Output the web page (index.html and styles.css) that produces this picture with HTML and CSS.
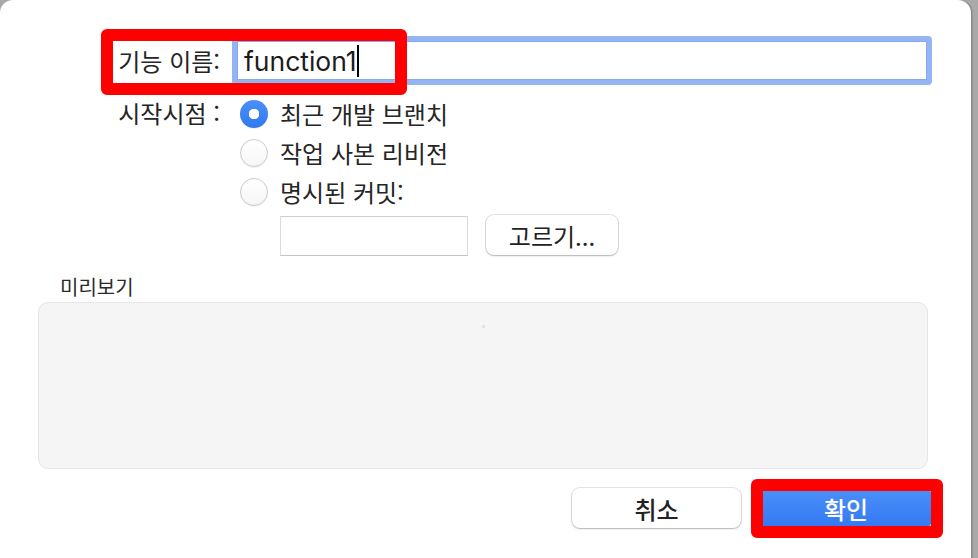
FILE: index.html
```html
<!DOCTYPE html>
<html lang="ko">
<head>
<meta charset="utf-8">
<title>기능 시작</title>
<link rel="stylesheet" href="styles.css">
</head>
<body>
<div class="window">
  <div class="form">
    <div class="label name-label">기능 이름:</div>
    <div class="name-field"><span class="name-text">function1</span><span class="caret"></span></div>

    <div class="label start-label">시작시점 :</div>
    <div class="options">
      <div class="option"><span class="radio checked"></span><span class="opt-text">최근 개발 브랜치</span></div>
      <div class="option"><span class="radio"></span><span class="opt-text">작업 사본 리비전</span></div>
      <div class="option"><span class="radio"></span><span class="opt-text">명시된 커밋:</span></div>
      <div class="commit-row">
        <div class="commit-field"></div>
        <div class="button pick">고르기...</div>
      </div>
    </div>
  </div>

  <div class="preview-label">미리보기</div>
  <div class="preview"><span class="speck"></span></div>

  <div class="actions">
    <div class="button cancel">취소</div>
    <div class="button primary">확인</div>
  </div>

  <div class="mark mark-name"></div>
  <div class="mark mark-ok"></div>
</div>
</body>
</html>
```

FILE: styles.css
```css
html, body {
  margin: 0;
  padding: 0;
}
body {
  width: 978px;
  height: 558px;
  overflow: hidden;
  background: #a9a9a9;
  font-family: "Noto Sans CJK KR", "Noto Sans", sans-serif;
  color: #252525;
}
.window {
  position: relative;
  width: 971px;
  height: 600px;
  background: #ffffff;
  border-radius: 13px 13px 0 0;
  box-shadow: 1px 0 0 #8a8a8a, 2px 0 0 #959595;
  box-sizing: border-box;
  padding-top: 36px;
}
.form {
  display: grid;
  grid-template-columns: 220px 712px;
  column-gap: 12px;
  row-gap: 10px;
  align-items: start;
}
.label {
  text-align: right;
  font-size: 24px;
  line-height: 38px;
  white-space: nowrap;
}
.name-label {
  line-height: 49px;
}
.start-label {
  line-height: 36px;
}
.name-field {
  box-sizing: border-box;
  width: 700px;
  height: 49px;
  border: 5px solid #94b4f4;
  border-radius: 4px;
  box-shadow: inset 0 0 0 1px #86a8ee;
  background: #fff;
  display: flex;
  align-items: center;
  padding-left: 7px;
}
.name-text {
  font-family: "Inter", "Liberation Sans", sans-serif;
  font-size: 26.5px;
  color: #1c1c1c;
}
.caret {
  display: inline-block;
  width: 2px;
  height: 32px;
  background: #000;
}
.options {
  padding-left: 8px;
  display: flex;
  flex-direction: column;
}
.option {
  display: flex;
  align-items: center;
  height: 38px;
  gap: 12px;
  font-size: 24px;
}
.option:nth-child(2) {
  height: 40px;
}
.opt-text {
  white-space: nowrap;
  margin-top: -2px;
}
.radio {
  box-sizing: border-box;
  width: 28px;
  height: 28px;
  border-radius: 50%;
  border: 1px solid #cacaca;
  background: linear-gradient(#ffffff, #f6f6f6);
  box-shadow: 0 1px 1px rgba(0,0,0,0.06);
  flex: none;
}
.radio.checked {
  border: none;
  background: radial-gradient(circle, #ffffff 0 5px, transparent 5.5px), linear-gradient(#4b90f8, #2f78f2);
}
.commit-row {
  display: flex;
  align-items: flex-start;
  gap: 18px;
  margin-top: 4px;
  padding-left: 40px;
}
.commit-field {
  box-sizing: border-box;
  width: 188px;
  height: 40px;
  margin-top: 1px;
  background: #fff;
  border: 1px solid #dcdcdc;
  border-top-color: #d0d0d0;
  border-bottom-color: #c4c4c4;
}
.button {
  box-sizing: border-box;
  height: 40px;
  border-radius: 8px;
  background: #fff;
  box-shadow: 0 0 0 1px rgba(0,0,0,0.10), 0 1px 2px rgba(0,0,0,0.22);
  display: flex;
  align-items: center;
  justify-content: center;
  font-size: 24px;
  color: #222;
}
.pick {
  width: 132px;
}
.preview-label {
  margin: 16px 0 0 60px;
  font-size: 20px;
  line-height: 30px;
  color: #2a2a2a;
}
.preview {
  position: relative;
  box-sizing: border-box;
  margin: 0 0 0 38px;
  width: 890px;
  height: 167px;
  background: #f5f5f5;
  border: 1px solid #e6e6e6;
  border-radius: 10px;
}
.speck {
  position: absolute;
  left: 443px;
  top: 22px;
  width: 3px;
  height: 3px;
  background: #e2e2e2;
}
.actions {
  display: flex;
  gap: 19px;
  margin: 19px 0 0 572px;
}
.cancel {
  width: 169px;
  font-weight: 500;
}
.primary {
  width: 172px;
  color: #fff;
  font-weight: 500;
  background: linear-gradient(#4b90f8, #3478f5);
  box-shadow: 0 0 0 1px rgba(40,100,220,0.4), 0 1px 2px rgba(0,0,0,0.2);
}
.mark {
  position: absolute;
  box-sizing: border-box;
  border: 12px solid #ff0000;
  border-radius: 6px;
}
.mark-name {
  left: 101px;
  top: 29px;
  width: 306px;
  height: 66px;
}
.mark-ok {
  left: 751px;
  top: 479px;
  width: 192px;
  height: 59px;
}
```
